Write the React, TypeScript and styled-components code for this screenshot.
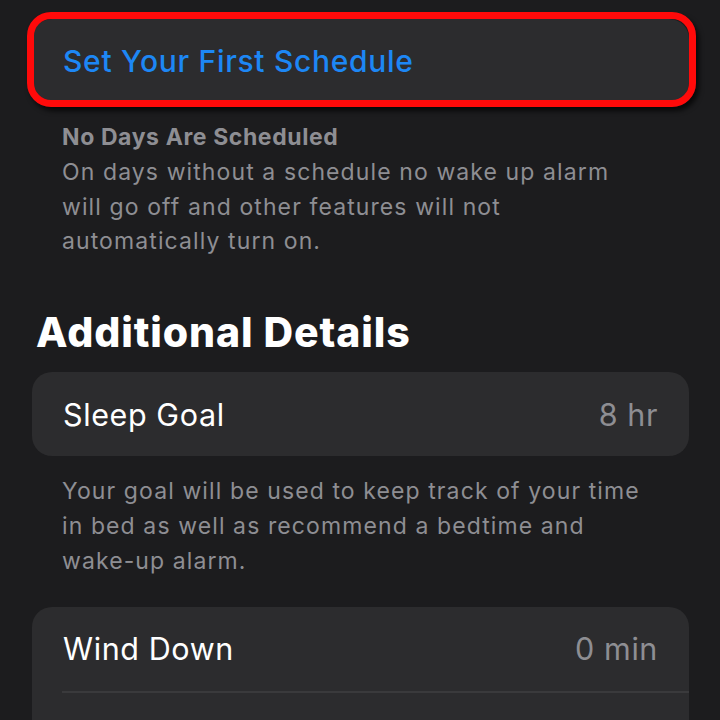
import React from "react";
import styled, { createGlobalStyle } from "styled-components";

const Global = createGlobalStyle`
  html, body { margin: 0; padding: 0; background: #1c1c1e; }
  body { font-family: Inter, "Noto Sans", "Liberation Sans", sans-serif; -webkit-font-smoothing: antialiased; }
`;

const Page = styled.div`
  width: 720px;
  height: 720px;
  overflow: hidden;
  background: #1c1c1e;
  box-sizing: border-box;
  padding: 19px 31px 0 32px;
  display: flex;
  flex-direction: column;
`;

const Card = styled.div<{ $mt?: number }>`
  position: relative;
  background: #2c2c2e;
  border-radius: 20px;
  margin-top: ${(p) => p.$mt ?? 0}px;
  flex-shrink: 0;
`;

const Highlight = styled.div`
  position: absolute;
  left: -5px;
  right: -7px;
  top: -7px;
  bottom: -4px;
  border: 7.5px solid #ff0a0a;
  border-radius: 24px;
  box-shadow: 3px 4px 5px rgba(0, 0, 0, 0.7);
  pointer-events: none;
`;

const Row = styled.div`
  height: 84px;
  display: flex;
  align-items: center;
  justify-content: space-between;
  padding: 0 31px 0 31px;
  box-sizing: border-box;
  font-size: 30.5px;
  letter-spacing: 0.6px;
  color: #ffffff;
`;

const LinkLabel = styled.span`
  color: #1d87f5;
  font-size: 30px;
  font-weight: 500;
  letter-spacing: 0.7px;
`;

const Value = styled.span`
  color: #8e8e93;
`;

const Separator = styled.div`
  height: 2px;
  background: #3a3a3c;
  margin-left: 30px;
`;

const Footer = styled.div<{ $mt: number }>`
  margin-top: ${(p) => p.$mt}px;
  padding: 0 30px;
  color: #8e8e93;
  font-size: 23px;
  line-height: 34.8px;
  letter-spacing: 1.1px;
  white-space: nowrap;
`;

const FooterTitle = styled.div`
  font-weight: 700;
  letter-spacing: 0.6px;
`;

const Heading = styled.h2`
  margin: 49px 0 0 4px;
  font-size: 41px;
  line-height: 48px;
  font-weight: 800;
  color: #ffffff;
  letter-spacing: 0.9px;
`;

export default function App() {
  return (
    <>
      <Global />
      <Page>
        <Card>
          <Row>
            <LinkLabel>Set Your First Schedule</LinkLabel>
          </Row>
          <Highlight />
        </Card>
        <Footer $mt={17}>
          <FooterTitle>No Days Are Scheduled</FooterTitle>
          On days without a schedule no wake up alarm
          <br />
          will go off and other features will not
          <br />
          automatically turn on.
        </Footer>
        <Heading>Additional Details</Heading>
        <Card $mt={16}>
          <Row>
            <span>Sleep Goal</span>
            <Value>8 hr</Value>
          </Row>
        </Card>
        <Footer $mt={18}>
          Your goal will be used to keep track of your time
          <br />
          in bed as well as recommend a bedtime and
          <br />
          wake-up alarm.
        </Footer>
        <Card $mt={28}>
          <Row>
            <span>Wind Down</span>
            <Value>0 min</Value>
          </Row>
          <Separator />
          <Row>
            <span>Wind Down Shortcuts</span>
          </Row>
        </Card>
      </Page>
    </>
  );
}
